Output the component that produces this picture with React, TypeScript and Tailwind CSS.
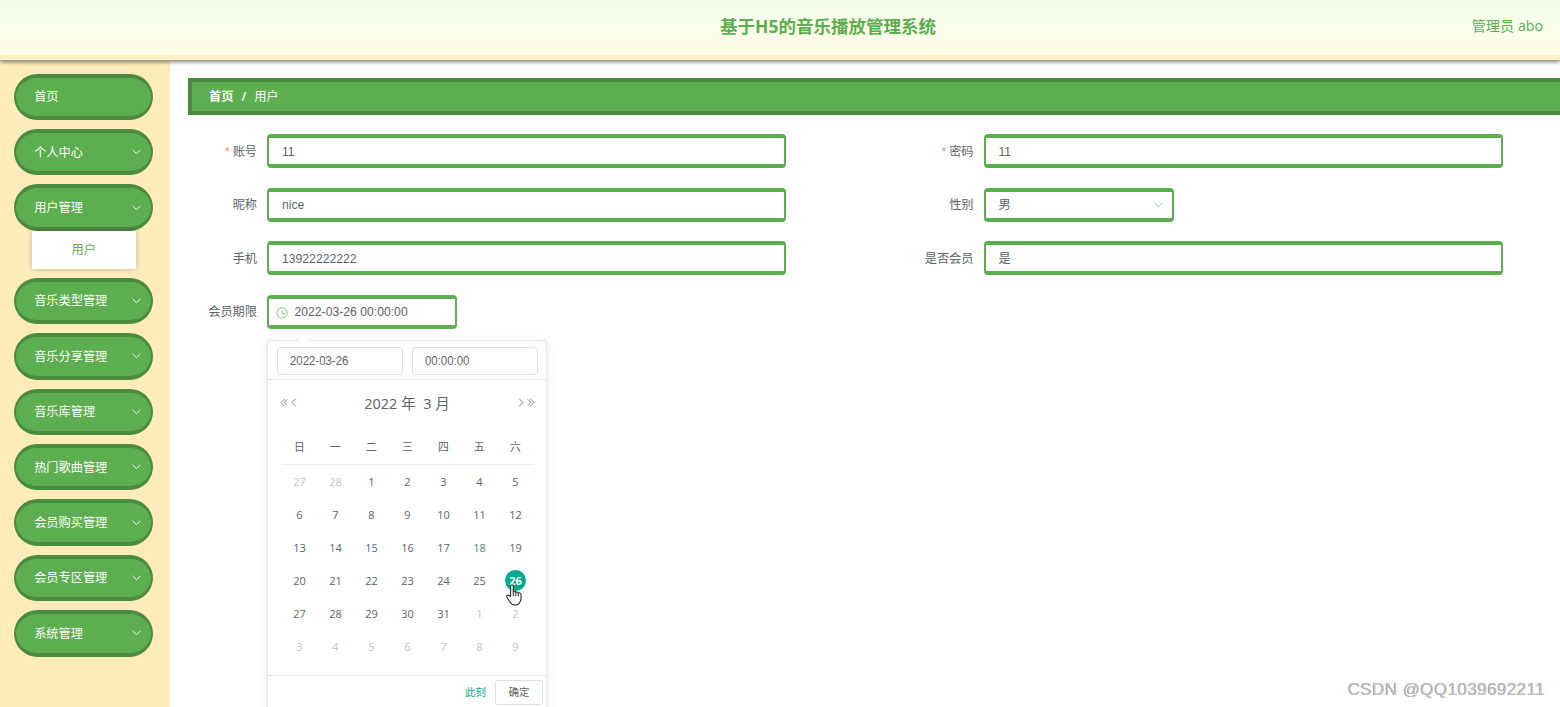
import type { ReactNode } from "react";
import clsx from "clsx";

const MENU = [
    { label: "首页" },
    { label: "个人中心", arrow: true },
    { label: "用户管理", arrow: true, children: ["用户"] },
    { label: "音乐类型管理", arrow: true },
    { label: "音乐分享管理", arrow: true },
    { label: "音乐库管理", arrow: true },
    { label: "热门歌曲管理", arrow: true },
    { label: "会员购买管理", arrow: true },
    { label: "会员专区管理", arrow: true },
    { label: "系统管理", arrow: true },
];

const WEEKDAYS = ["日", "一", "二", "三", "四", "五", "六"];

// 42 cells: two days of February, all of March, nine days of April
const DAYS = Array.from({ length: 42 }, (_, i) => {
    if (i < 2) return { day: 27 + i, muted: true };
    if (i < 33) return { day: i - 1, muted: false };
    return { day: i - 32, muted: true };
});

function Chevron({ className = "" }: { className?: string }) {
    return (
        <svg width="9" height="6" viewBox="0 0 9 6" fill="none" stroke="currentColor" className={className}>
            <path d="M0.6 0.8 4.5 4.7 8.4 0.8" strokeWidth="0.95" />
        </svg>
    );
}

function Angle({ double = false, flip = false }: { double?: boolean; flip?: boolean }) {
    return (
        <svg
            width={double ? 8 : 6}
            height="9"
            viewBox={double ? "0 0 8 9" : "0 0 6 9"}
            fill="none"
            stroke="currentColor"
            strokeWidth="0.8"
            className={clsx(flip && "-scale-x-100")}
        >
            <path d="M4.7 0.8 1 4.5 4.7 8.2" />
            {double && <path d="M7.3 1.3 4.1 4.5 7.3 7.7" />}
        </svg>
    );
}

function Field({ label, required = false, children }: { label: string; required?: boolean; children: ReactNode }) {
    return (
        <div className="flex h-[34.5px] w-[716.5px] items-center">
            <div className="w-[69.5px] shrink-0 pt-px text-right whitespace-nowrap text-[#606266]">
                {required && <span className="mr-[3px] font-['Liberation_Sans',sans-serif] text-[#f78989]">*</span>}
                {label}
            </div>
            <div className="ml-[10px] flex">{children}</div>
        </div>
    );
}

function Box({ short = false, children }: { short?: boolean; children: ReactNode }) {
    return (
        <div
            className={clsx(
                "flex h-[34px] items-center rounded-[4px] border-x-2 border-y-4 border-[#5cae50] bg-white pt-px font-['Liberation_Sans','Noto_Sans_CJK_SC',sans-serif] text-[#606266]",
                short ? "w-[190px]" : "w-[519px]",
            )}
        >
            {children}
        </div>
    );
}

function DatePicker() {
    return (
        <div className="absolute top-[340px] left-[267px] h-[400px] w-[280px] rounded-[3px] border border-[#e4e7ed] bg-white text-[#606266] shadow-[0_2px_10px_rgba(0,0,0,0.1)]">
            <div className="absolute -top-[4px] left-[31px] size-[9px] rotate-45 rounded-tl-[2px] bg-white" />
            <div className="relative flex h-[39px] gap-[9px] border-b border-[#e4e4e4] px-[8.5px] pt-[6px] font-['Liberation_Sans',sans-serif]">
                <div className="flex h-[28px] flex-1 items-center rounded-[3px] border border-[#e0e2e8] pl-[12.5px] text-[12px] leading-none">
                    <span className="origin-left scale-x-[0.95]">2022-03-26</span>
                </div>
                <div className="flex h-[28px] flex-1 items-center rounded-[3px] border border-[#e0e2e8] pl-[12.5px] text-[12px] leading-none">
                    <span className="origin-left scale-x-[0.95]">00:00:00</span>
                </div>
            </div>
            <div className="flex h-[48px] items-center px-[11.5px] pb-[3px]">
                <div className="flex w-[30px] items-center gap-[3px]">
                    <Angle double />
                    <Angle />
                </div>
                <div className="flex-1 pt-[4px] text-center text-[14.5px] whitespace-pre">2022 年  3 月</div>
                <div className="flex w-[30px] items-center justify-end gap-[3px]">
                    <Angle flip />
                    <Angle double flip />
                </div>
            </div>
            <div className="mr-[12.5px] ml-[13.5px] grid h-[36.5px] grid-cols-7 items-center border-b border-[#ebeef5] pt-[4px] text-center text-[10.8px]">
                {WEEKDAYS.map((d) => (
                    <span key={d}>{d}</span>
                ))}
            </div>
            <div className="mr-[12.5px] ml-[13.5px] mt-[1px] grid grid-cols-7 text-center text-[11px]">
                {DAYS.map(({ day, muted }, i) => (
                    <div key={i} className="flex h-[32.85px] items-center justify-center">
                        <span
                            className={clsx(
                                "flex size-[21px] items-center justify-center rounded-full",
                                muted && "text-[#c0c4cc]",
                                !muted && day === 18 && "text-[#4c8377]",
                                !muted && day === 26 && "bg-[#00aa8d] font-bold text-white",
                            )}
                        >
                            {day}
                        </span>
                    </div>
                ))}
            </div>
            <div className="mt-[12.5px] flex h-[33px] items-center justify-end gap-[9px] border-t border-[#e4e4e4] pr-[3px] text-[10.5px]">
                <span className="text-[#00a78e]">此刻</span>
                <span className="flex h-[25px] w-[48px] items-center justify-center rounded-[3px] border border-[#dcdfe6]">
                    确定
                </span>
            </div>
        </div>
    );
}

export default function App() {
    return (
        <div className="relative flex h-[707px] w-[1560px] flex-col overflow-hidden bg-white font-['Open_Sans','Noto_Sans_CJK_SC',sans-serif] text-[12.2px] leading-none">
            <header className="relative z-10 flex h-[60px] shrink-0 items-center border-b-[5px] border-[#fdf2c6] bg-linear-to-b from-[#effce8] via-[#fbffeb] to-[#fdfce6] text-[#5cae50] shadow-[0_1px_0_#a5a29a,0_2px_4px_rgba(0,0,0,0.5)]">
                <h1 className="w-full pb-px pl-[96px] text-center text-[17.5px] font-bold">基于H5的音乐播放管理系统</h1>
                <div className="absolute top-[19px] right-[17px] text-[14.2px]">管理员 abo</div>
            </header>

            <div className="flex min-h-0 flex-1">
                <aside className="w-[170px] shrink-0 bg-[#ffebbc] pt-[13.5px] pl-[14.2px]">
                    {MENU.map((item) => (
                        <div key={item.label} className="mb-[9px] w-[139px]">
                            <div className="flex h-[46.42px] items-center justify-between rounded-full border-x-[2.5px] border-y-4 border-[#4a8b40] bg-[#5cae50] pt-px pr-[10px] pl-[18px] text-white">
                                {item.label}
                                {item.arrow && <Chevron className="-mt-px" />}
                            </div>
                            {item.children?.map((child) => (
                                <div
                                    key={child}
                                    className="mx-auto flex h-[38px] w-[104px] items-center justify-center bg-white text-[#5cae50] shadow-[0_0_5px_rgba(0,0,0,0.25)]"
                                >
                                    {child}
                                </div>
                            ))}
                        </div>
                    ))}
                </aside>

                <main className="min-w-0 flex-1 pt-[18px] pl-[17.5px]">
                    <nav className="flex h-[37px] items-center border-4 border-r-0 border-[#4a8b40] bg-[#5cae50] pt-[2px] pl-[17.5px] text-white">
                        <span className="font-bold">首页</span>
                        <span className="mx-[8px] font-semibold">/</span>
                        <span>用户</span>
                    </nav>
                    <div className="mt-[19px] grid w-[1433px] grid-cols-2 gap-y-[19.1px]">
                        <Field label="账号" required>
                            <Box><span className="pl-[13px]">11</span></Box>
                        </Field>
                        <Field label="密码" required>
                            <Box><span className="pl-[13px]">11</span></Box>
                        </Field>
                        <Field label="昵称">
                            <Box><span className="pl-[13px]">nice</span></Box>
                        </Field>
                        <Field label="性别">
                            <Box short>
                                <span className="flex-1 pl-[13px]">男</span>
                                <Chevron className="mr-[9px] text-[#7dbfa0]" />
                            </Box>
                        </Field>
                        <Field label="手机">
                            <Box><span className="pl-[13px]">13922222222</span></Box>
                        </Field>
                        <Field label="是否会员">
                            <Box><span className="pl-[13px]">是</span></Box>
                        </Field>
                        <Field label="会员期限">
                            <Box short>
                                <svg
                                    width="12"
                                    height="12"
                                    viewBox="0 0 12 12"
                                    fill="none"
                                    stroke="#7dbf75"
                                    strokeWidth="0.9"
                                    className="mr-[6.5px] ml-[7px]"
                                >
                                    <circle cx="6" cy="6" r="5.2" />
                                    <path d="M5.8 2.8V6.4H8.8" />
                                </svg>
                                <span>2022-03-26 00:00:00</span>
                            </Box>
                        </Field>
                    </div>
                </main>
            </div>

            <DatePicker />

            {/* Hand pointer over the selected day */}
            <svg width="17" height="22" viewBox="0 0 17 22" className="absolute top-[584px] left-[506px]">
                <path
                    d="M4.6 12.3V2.2C4.6 0.3 7.3 0.3 7.3 2.2V8.1C7.4 6.9 9.7 7 9.8 8.6C10 7.6 12.2 7.8 12.3 9.3C12.7 8.5 15 8.8 15 10.5V14.5C15 16.4 14.4 17 13.7 18.5C12.7 20.5 11.4 21 9.2 21C6.7 21 5.4 20.3 4.1 18.2L1 13.5C0.2 11.8 1.8 10.6 3.1 11.5Z"
                    fill="white"
                    stroke="#292929"
                    strokeWidth="1.1"
                    strokeLinejoin="round"
                />
                <path d="M7.3 8V12M9.8 8.8V12M12.3 9.6V12.3" stroke="#292929" strokeWidth="1" />
            </svg>

            <div className="absolute top-[681px] right-[14.5px] font-['Liberation_Sans',sans-serif] text-[17px] tracking-[0.43px] whitespace-nowrap text-[#c4c4c4] [text-shadow:-0.5px_-0.5px_0.5px_#777]">
                CSDN @QQ1039692211
            </div>
        </div>
    );
}
